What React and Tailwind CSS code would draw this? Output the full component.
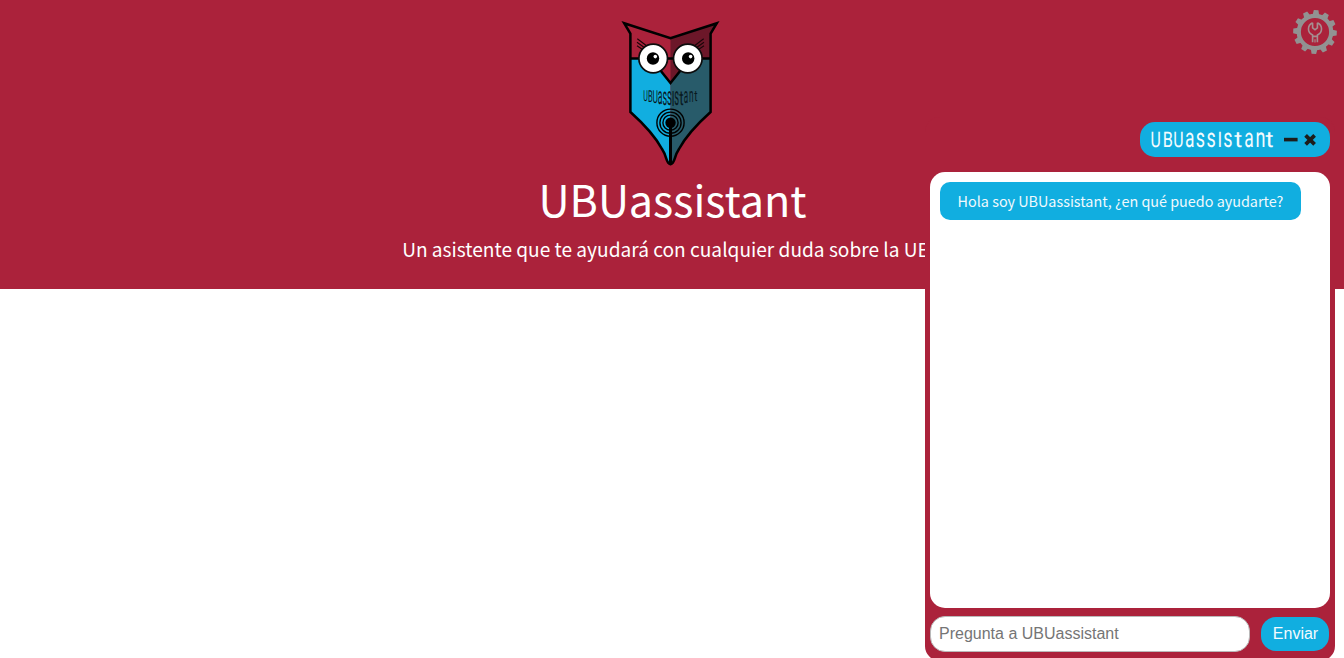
import React from "react";

const WORD = ["U", "B", "U", "a", "s", "s", "I", "s", "t", "a", "n", "t"];

// Glyph height in em, used to bring every letter to the same unicase height.
const RATIO = { U: 0.7, B: 0.7, I: 0.7, a: 0.56, s: 0.56, n: 0.55, t: 0.67 };

// Horizontal centre and condensing factor of every letter of the wordmark.
const TITLE_X = [5.7, 17.7, 28.5, 39.7, 50.4, 61.2, 69.9, 78, 88.3, 99, 110.4, 119.5];
const TITLE_SX = { U: 0.74, B: 0.76, I: 0.8, a: 0.65, s: 0.67, n: 0.66, t: 1.1 };

function Wordmark() {
  return (
    <svg width="126" height="22" viewBox="0 0 126 22" className="block overflow-visible">
      <g fill="#f4fbfe" textRendering="geometricPrecision" className="font-['Roboto',sans-serif] font-normal">
        {WORD.map((c, i) => (
          <text
            key={i}
            transform={`translate(${TITLE_X[i]} 17.5) scale(${TITLE_SX[c]} 1)`}
            textAnchor="middle"
            fontSize={15 / RATIO[c]}
          >
            {c}
          </text>
        ))}
      </g>
    </svg>
  );
}

const ARC_X = [645.6, 650.4, 655.2, 660.2, 664.8, 669.3, 673, 676.7, 681.4, 686, 691.3, 695.8];
const ARC_BOTTOM = [101.3, 102.3, 103.3, 104.2, 104.8, 105.3, 105.5, 105.3, 104.5, 103.3, 102.1, 101];
const ARC_SX = { U: 0.47, B: 0.46, I: 0.55, a: 0.36, s: 0.36, n: 0.4, t: 0.66 };

function OwlLogo() {
  return (
    <svg width="100" height="148" viewBox="620 19 100 148" className="block overflow-visible">
      <path d="M623.5 23 670.5 38V84L662 73 630.5 58.5V34Z" fill="#ab223b" />
      <path d="M717.5 23 670.5 38V84L679 73 710.5 58.5V34Z" fill="#6c1729" />
      <path d="M630.5 58.5H653L670.5 84V164C666 163 668 157 662 149C655 136 646 126 630.5 112Z" fill="#11aee0" />
      <path d="M710.5 58.5H688L670.5 84V164C675 163 673 157 679 149C686 136 695 126 710.5 112Z" fill="#285b6a" />
      <g fill="none" stroke="#000" strokeWidth="2.5">
        <path d="M624.2 23.2 670.5 38.2 716.8 23.2 710.6 33.6V112C695 126 686 136 679 149C673.5 157 675.5 163 670.5 164.2C665.5 163 667.5 157 662 149C655 136 646 126 630.4 112V33.6Z" />
        <path d="M630.4 58.5H710.6M660.5 70.5 670.5 83 680.5 70.5" />
      </g>
      <path
        d="M637.3 38.8 646.5 45.8M637 42.3 644.3 47.5M637 45.8 642.5 49.5M703.7 38.8 694.5 45.8M704 42.3 696.7 47.5M704 45.8 698.5 49.5"
        fill="none"
        stroke="#1a0508"
        strokeWidth="1.1"
      />
      <g fill="#fff" stroke="#0d0d0d" strokeWidth="1.7">
        <circle cx="653.2" cy="58.5" r="14.3" />
        <circle cx="687.8" cy="58.5" r="14.3" />
      </g>
      <circle cx="653" cy="58.5" r="6.2" />
      <circle cx="688.2" cy="58.5" r="6.2" />
      <circle cx="655.3" cy="56.6" r="1.8" fill="#fff" />
      <circle cx="690.6" cy="56.6" r="1.8" fill="#fff" />
      <g fill="#08191f" textRendering="geometricPrecision" className="font-['Roboto',sans-serif] font-normal">
        {WORD.map((c, i) => (
          <text
            key={i}
            transform={`translate(${ARC_X[i]} ${ARC_BOTTOM[i]}) scale(${ARC_SX[c]} 1)`}
            textAnchor="middle"
            fontSize={(ARC_BOTTOM[i] - 90.8) / RATIO[c]}
          >
            {c}
          </text>
        ))}
      </g>
      <circle cx="670.5" cy="122.7" r="5.2" />
      <g fill="none" stroke="#000" strokeWidth="1.4">
        <circle cx="670.5" cy="122.7" r="7.6" />
        <circle cx="670.5" cy="122.7" r="10.6" />
        <circle cx="670.5" cy="122.7" r="13.6" />
      </g>
      <path d="M670.5 124V163" stroke="#000" strokeWidth="3" />
    </svg>
  );
}

const TEETH = [0, 30, 60, 90, 120, 150, 180, 210, 240, 270, 300, 330];

function GearIcon() {
  return (
    <svg width="46" height="46" viewBox="-23 -23 46 46" className="block">
      <circle r="16.2" fill="none" stroke="#929292" strokeWidth="4.2" />
      {TEETH.map((a) => (
        <path key={a} d="M-3.4 -16.5 -2.3 -21.8H2.3L3.4 -16.5Z" fill="#929292" transform={`rotate(${a + 3})`} />
      ))}
      <path
        d="M-2.4 -9.2C-8 -6.5 -7.8 .5 -2.4 3V10.3M2.4 -9.2C8 -6.5 7.8 .5 2.4 3V10.3M-2.4 -9.2V-4.2L0 -2.2 2.4 -4.2V-9.2M-2.6 4.4H2.6"
        fill="none"
        stroke="#a68e91"
        strokeWidth="1.6"
      />
      <path d="M0 7.2V10.5" stroke="#a68e91" strokeWidth="1.2" />
    </svg>
  );
}

export default function App() {
  return (
    <div className="relative h-[658px] w-full overflow-hidden bg-white font-['Noto_Sans_CJK_JP',sans-serif]">
      <header className="flex h-[289px] flex-col items-center bg-[#ab223b] pt-[19px] text-white">
        <div className="pr-1">
          <OwlLogo />
        </div>
        <h1 className="mt-[3px] pl-px text-[43.1px] leading-[56px] whitespace-nowrap">UBUassistant</h1>
        <p className="mt-[9px] pl-0.5 text-[19.13px] leading-[28px] whitespace-nowrap">
          Un asistente que te ayudará con cualquier duda sobre la UBU
        </p>
      </header>

      <button className="absolute top-[9px] right-[6px]" aria-label="Ajustes">
        <GearIcon />
      </button>

      <section className="absolute top-[117px] right-[9px] flex h-[544px] w-[410px] flex-col rounded-[15px] bg-[#ab223b] p-[5px]">
        <div className="flex h-[35px] w-[190px] items-center self-end rounded-[15px] bg-[#11aee0] pl-[10px]">
          <Wordmark />
          <svg width="36" height="16" viewBox="0 0 36 16" className="ml-[7px] block" fill="none" stroke="#1d1d1b">
            <path d="M1 7.6H14.6" strokeWidth="3.6" />
            <path d="M22.6 3.4 31.6 12.4M31.6 3.4 22.6 12.4" strokeWidth="3.8" />
          </svg>
        </div>

        <div className="mt-[15px] flex h-[436px] flex-col items-start rounded-[15px] bg-white p-[10px]">
          <p className="flex h-[38px] w-[361px] items-center justify-center rounded-[10px] bg-[#11aee0] text-[14.38px] leading-[22px] whitespace-nowrap text-[#f0f9fd]">
            Hola soy UBUassistant, ¿en qué puedo ayudarte?
          </p>
        </div>

        <form className="mt-2 flex items-center font-['Liberation_Sans',sans-serif] text-base">
          <input
            className="h-9 w-[320px] rounded-[15px] border border-[#b9b9b9] bg-white px-2 placeholder:text-[#757575]"
            placeholder="Pregunta a UBUassistant"
          />
          <button type="button" className="ml-[11px] h-[34px] w-[68px] rounded-[15px] bg-[#11aee0] pl-px text-[#f4fbfe]">
            Enviar
          </button>
        </form>
      </section>
    </div>
  );
}
